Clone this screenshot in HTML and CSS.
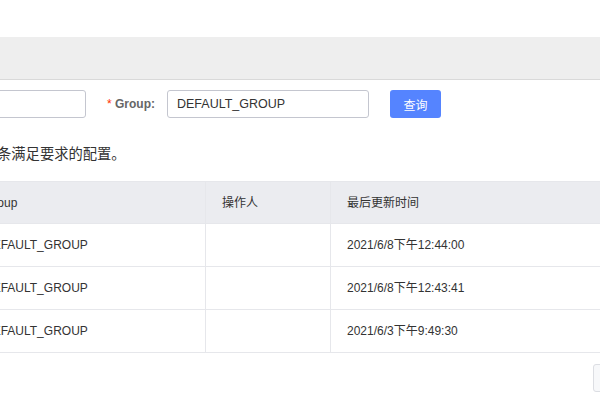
FILE: index.html
```html
<!DOCTYPE html>
<html lang="zh-CN">
<head>
<meta charset="utf-8">
<link rel="stylesheet" href="styles.css">
</head>
<body>
<div class="page">
  <div class="top-space"></div>
  <div class="band"></div>
  <div class="form">
    <div class="input input-data"></div>
    <label class="label"><span class="req">*</span> Group:</label>
    <div class="input input-group">DEFAULT_GROUP</div>
    <button class="btn">查询</button>
  </div>
  <div class="summary">条满足要求的配置。</div>
  <div class="table">
    <div class="row head">
      <div class="cell"><span class="txt">Group</span></div>
      <div class="cell"><span class="txt">操作人</span></div>
      <div class="cell"><span class="txt">最后更新时间</span></div>
    </div>
    <div class="row">
      <div class="cell"><span class="txt">DEFAULT_GROUP</span></div>
      <div class="cell"></div>
      <div class="cell"><span class="txt">2021/6/8下午12:44:00</span></div>
    </div>
    <div class="row">
      <div class="cell"><span class="txt">DEFAULT_GROUP</span></div>
      <div class="cell"></div>
      <div class="cell"><span class="txt">2021/6/8下午12:43:41</span></div>
    </div>
    <div class="row">
      <div class="cell"><span class="txt">DEFAULT_GROUP</span></div>
      <div class="cell"></div>
      <div class="cell"><span class="txt">2021/6/3下午9:49:30</span></div>
    </div>
  </div>
  <div class="pager">
    <div class="pager-btn"></div>
  </div>
</div>
</body>
</html>
```

FILE: styles.css
```css
html, body {
  margin: 0;
  padding: 0;
  background: #fff;
}
.page {
  width: 600px;
  height: 400px;
  overflow: hidden;
  font-family: "Liberation Sans", "Noto Sans CJK SC", sans-serif;
  color: #333;
  font-size: 12px;
}
.top-space {
  height: 37px;
}
.band {
  height: 42px;
  background: #eeeeee;
  border-bottom: 1px solid #d9d9d9;
}
.form {
  display: flex;
  align-items: center;
  height: 28px;
  margin-top: 10px;
}
.input {
  box-sizing: border-box;
  height: 28px;
  border: 1px solid #c4c6cf;
  border-radius: 3px;
  background: #fff;
  display: flex;
  align-items: center;
  padding-left: 9px;
  color: #333;
  font-size: 12.5px;
  flex: none;
}
.input-data {
  width: 100px;
  margin-left: -14px;
}
.label {
  margin-left: 21px;
  font-weight: bold;
  color: #666;
  font-size: 12px;
  width: 60px;
  flex: none;
}
.req {
  color: #ff3000;
  font-weight: normal;
}
.input-group {
  width: 202px;
}
.btn {
  margin-left: 21px;
  width: 51px;
  height: 28px;
  border: none;
  border-radius: 3px;
  background: #5584ff;
  color: #fff;
  font-family: "Liberation Sans", "Noto Sans CJK SC", sans-serif;
  font-size: 12px;
  padding: 0;
  flex: none;
}
.summary {
  margin-top: 26px;
  margin-left: -3px;
  height: 20px;
  line-height: 20px;
  font-size: 14.3px;
  color: #333;
}
.table {
  margin-top: 17px;
  margin-left: -32px;
  width: 700px;
  border-top: 1px solid #e6e7eb;
}
.row {
  display: grid;
  grid-template-columns: 238px 125px 337px;
  height: 42px;
  border-bottom: 1px solid #e6e7eb;
}
.row.head {
  height: 41px;
  background: #ebecf0;
}
.cell {
  display: flex;
  align-items: center;
  padding-left: 16px;
  border-right: 1px solid #e6e7eb;
  box-sizing: border-box;
  font-size: 12px;
  color: #333;
}
.txt {
  display: block;
  height: 16px;
  line-height: 16px;
  white-space: nowrap;
}
.pager {
  display: flex;
  margin-top: 11px;
}
.pager-btn {
  margin-left: 593px;
  width: 40px;
  height: 28px;
  box-sizing: border-box;
  border: 1px solid #dcdee3;
  border-radius: 3px;
  background: #f7f8fa;
  flex: none;
}
```
